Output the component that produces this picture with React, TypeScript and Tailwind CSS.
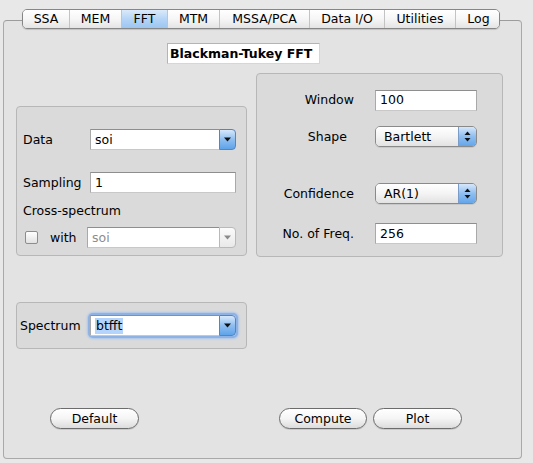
import React from "react";

const tabs = [
  { t: "SSA", w: "w-[46px]" },
  { t: "MEM", w: "w-[52px]" },
  { t: "FFT", w: "w-[46px]" },
  { t: "MTM", w: "w-[52px]" },
  { t: "MSSA/PCA", w: "w-[90px]" },
  { t: "Data I/O", w: "w-[75px]" },
  { t: "Utilities", w: "w-[71px]" },
  { t: "Log", w: "w-[46px]" },
];

function DownArrow({ color = "#111" }: { color?: string }) {
  return (
    <svg width="7" height="5" viewBox="0 0 7 5">
      <path d="M0 0.5 L7 0.5 L3.5 4.5 Z" fill={color} />
    </svg>
  );
}

function UpDown() {
  return (
    <svg width="7" height="11" viewBox="0 0 7 11">
      <path d="M0.5 4 L6.5 4 L3.5 0.5 Z" fill="#111" />
      <path d="M0.5 7 L6.5 7 L3.5 10.5 Z" fill="#111" />
    </svg>
  );
}

function Combo({
  value,
  width,
  disabled,
  focused,
}: {
  value: string;
  width: string;
  disabled?: boolean;
  focused?: boolean;
}) {
  return (
    <div
      className={
        width +
        " flex h-[21px] " +
        (focused ? "rounded-[3px] shadow-[0_0_0_2px_#8db2e3,0_0_2px_3px_#a9c6ee]" : "")
      }
    >
      <div
        className={
          "flex flex-1 items-center border border-t-[#8e8e8e] border-l-[#a9a9a9] border-b-[#c8c8c8] border-r-0 bg-white pl-[4px] " +
          (disabled ? "text-[#8c8c8c]" : "text-black")
        }
      >
        {focused ? <span className="bg-[#b5d4fb] px-[1px]">{value}</span> : value}
      </div>
      {disabled ? (
        <div className="flex w-[17px] items-center justify-center rounded-r-[4px] border border-[#b9b9b9] bg-linear-to-b from-[#fbfbfb] to-[#e9e9e9]">
          <DownArrow color="#8a8a8a" />
        </div>
      ) : (
        <div className="flex w-[17px] items-center justify-center rounded-r-[4px] border border-[#5d82b6] bg-linear-to-b from-[#d7e8fb] via-[#8ebef0] to-[#5ea3ea]">
          <DownArrow />
        </div>
      )}
    </div>
  );
}

function Popup({ value }: { value: string }) {
  return (
    <div className="flex h-[21px] w-[102px] overflow-hidden rounded-[5px] border border-[#8a8a8a] shadow-[0_1px_0_#c8c8c8]">
      <div className="flex flex-1 items-center bg-linear-to-b from-white via-[#f4f4f4] to-[#e2e2e2] pl-[8px]">
        {value}
      </div>
      <div className="flex w-[18px] items-center justify-center border-l border-[#7b9cc9] bg-linear-to-b from-[#d6e7fb] via-[#8fbef0] to-[#63a6ea]">
        <UpDown />
      </div>
    </div>
  );
}

function Field({ value, width }: { value: string; width: string }) {
  return (
    <div
      className={
        width +
        " flex h-[21px] items-center border border-t-[#8e8e8e] border-l-[#a9a9a9] border-r-[#a9a9a9] border-b-[#c8c8c8] bg-white pl-[4px]"
      }
    >
      {value}
    </div>
  );
}

function Button({ label, width }: { label: string; width: string }) {
  return (
    <div
      className={
        width +
        " flex h-[21px] items-center justify-center rounded-full border border-[#6c6c6c] bg-linear-to-b from-white via-[#f5f5f5] to-[#dcdcdc] shadow-[0_1px_0_#c9c9c9]"
      }
    >
      {label}
    </div>
  );
}

export default function App() {
  return (
    <div className="h-[463px] w-[533px] overflow-hidden bg-[#e8e8e8] pt-[20px] pl-[3px] font-['DejaVu_Sans',sans-serif] text-[12.5px] leading-[16px] text-black">
      <div className="h-[439px] w-[519px] rounded-[4px] border border-[#a9a9a9] border-t-[#9c9c9c] bg-[#e3e3e3]">
        {/* tab strip */}
        <div className="-mt-[12px] ml-[18px] flex h-[20px] w-[478px] overflow-hidden rounded-[5px] border border-[#868686] shadow-[0_1px_1px_rgba(0,0,0,0.15)]">
          {tabs.map((tab, i) => (
            <div
              key={tab.t}
              className={
                tab.w +
                " flex shrink-0 items-center justify-center " +
                (i > 0 ? "border-l border-[#c3c3c3] " : "") +
                (tab.t === "FFT"
                  ? "bg-linear-to-b from-[#dbeafb] via-[#b5d4f6] to-[#9cc6f1]"
                  : "bg-linear-to-b from-white via-[#f6f6f6] to-[#e4e4e4]")
              }
            >
              {tab.t}
            </div>
          ))}
        </div>

        {/* title */}
        <div className="mt-[14px] ml-[163px] flex h-[21px] w-[153px] items-center border border-[#b4b4b4] border-r-[#d6d6d6] border-b-[#d6d6d6] bg-white pl-[2px] font-bold">
          Blackman-Tukey FFT
        </div>

        {/* columns */}
        <div className="mt-[9px] ml-[12px] flex gap-[9px]">
          <div className="flex w-[231px] flex-col">
            <div className="mt-[33px] h-[150px] rounded-[4px] border border-[#b7b7b7] bg-[#dadada] pt-[22px] pl-[6px]">
              <div className="flex h-[21px] items-center">
                <div className="w-[67px]">Data</div>
                <Combo value="soi" width="w-[146px]" />
              </div>
              <div className="mt-[22px] flex h-[21px] items-center">
                <div className="w-[67px]">Sampling</div>
                <Field value="1" width="w-[146px]" />
              </div>
              <div className="mt-[10px] h-[16px]">Cross-spectrum</div>
              <div className="mt-[8px] flex h-[21px] items-center">
                <div className="ml-[2px] h-[13px] w-[13px] rounded-[2px] border border-[#8d8d8d] bg-linear-to-b from-white to-[#e2e2e2]" />
                <div className="ml-[12px] w-[37px]">with</div>
                <Combo value="soi" width="w-[149px]" disabled />
              </div>
            </div>
            <div className="mt-[46px] h-[47px] rounded-[4px] border border-[#b7b7b7] bg-[#dadada] pt-[12px] pl-[3px]">
              <div className="flex h-[21px] items-center">
                <div className="w-[70px]">Spectrum</div>
                <Combo value="btfft" width="w-[146px]" focused />
              </div>
            </div>
          </div>

          <div className="h-[184px] w-[247px] rounded-[4px] border border-[#b7b7b7] bg-[#dadada] pt-[15px]">
            <div className="flex h-[22px] items-center">
              <div className="w-[97px] text-right">Window</div>
              <div className="ml-[21px]">
                <Field value="100" width="w-[102px]" />
              </div>
            </div>
            <div className="mt-[15px] flex h-[21px] items-center">
              <div className="w-[97px] pr-[7px] text-right">Shape</div>
              <div className="ml-[21px]">
                <Popup value="Bartlett" />
              </div>
            </div>
            <div className="mt-[36px] flex h-[21px] items-center">
              <div className="w-[97px] text-right">Confidence</div>
              <div className="ml-[21px]">
                <Popup value="AR(1)" />
              </div>
            </div>
            <div className="mt-[19px] flex h-[21px] items-center">
              <div className="w-[97px] text-right">No. of Freq.</div>
              <div className="ml-[21px]">
                <Field value="256" width="w-[102px]" />
              </div>
            </div>
          </div>
        </div>

        {/* buttons */}
        <div className="mt-[59px] ml-[46px] flex">
          <Button label="Default" width="w-[89px]" />
          <div className="ml-[140px]">
            <Button label="Compute" width="w-[88px]" />
          </div>
          <div className="ml-[6px]">
            <Button label="Plot" width="w-[89px]" />
          </div>
        </div>
      </div>
    </div>
  );
}
